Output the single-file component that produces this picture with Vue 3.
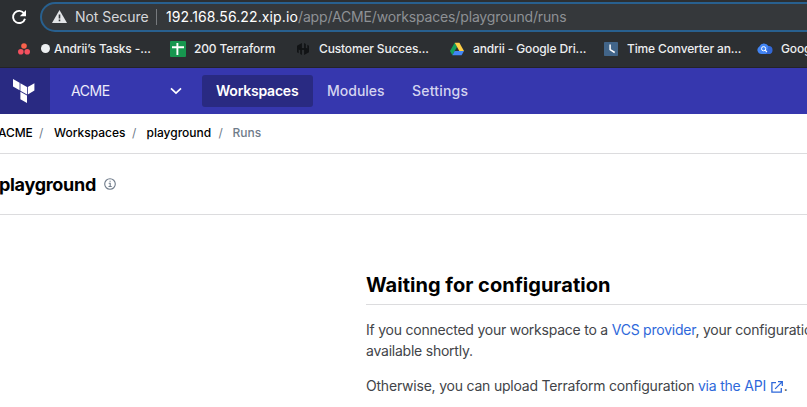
<script setup>
const bookmarks = [
  { icon: 'asana', label: "Andrii’s Tasks -...", dot: true, width: 154, spacing: '-0.13px' },
  { icon: 'sheet', label: '200 Terraform', width: 125, spacing: '-0.15px' },
  { icon: 'hashi', label: 'Customer Succes...', width: 154, spacing: '-0.16px' },
  { icon: 'drive', label: 'andrii - Google Dri...', width: 154, spacing: '-0.12px' },
  { icon: 'clock', label: 'Time Converter an...', width: 154, spacing: '-0.15px' },
  { icon: 'cloud', label: 'Google', width: 154, spacing: '-0.15px' },
]
</script>

<template>
  <div class="screen">
    <header class="browser">
      <div class="toolbar">
        <svg class="reload" viewBox="0 0 16 16">
          <path d="M13.2 4.5A6.1 6.1 0 1 0 14 9.7" fill="none" stroke="#fff" stroke-width="1.9" />
          <path d="M15 1v6.2H8.8z" fill="#fff" />
        </svg>
        <div class="address">
          <svg class="warning" viewBox="0 0 15 13">
            <path d="M7.5 0L15 13H0z" fill="#e3e5e8" />
            <path d="M7.5 4.5v4M7.5 9.6v1.7" stroke="#35383b" stroke-width="1.6" />
          </svg>
          <span class="secure">Not Secure</span>
          <span class="divider"></span>
          <span class="host">192.168.56.22.xip.io</span><span class="path">/app/ACME/workspaces/playground/runs</span>
        </div>
      </div>
      <nav class="bookmarks">
        <div v-for="b in bookmarks" :key="b.icon" class="bookmark" :style="{ width: b.width + 'px' }">
          <svg class="bm-icon" viewBox="0 0 16 16">
            <g v-if="b.icon === 'asana'">
              <circle cx="8" cy="5" r="2.8" fill="#f9624c" />
              <circle cx="4.8" cy="10.7" r="2.8" fill="#f5505e" />
              <circle cx="11.2" cy="10.7" r="2.8" fill="#f5505e" />
            </g>
            <g v-else-if="b.icon === 'sheet'">
              <rect width="16" height="16" rx="1" fill="#17964f" />
              <path d="M2 6.3h12M7.4 2v12" stroke="#fff" stroke-width="1.9" />
            </g>
            <g v-else-if="b.icon === 'hashi'" fill="#111315">
              <path d="M6.9 2v12l-1.7-1V9.3L3.7 8.5v3.7L2 11.2V4.8z" />
              <path d="M5.5 7.1h5v1.8h-5z" />
              <path d="M9.1 14V2l1.7 1v3.7l1.5.8V3.8L14 4.8v6.4z" />
            </g>
            <g v-else-if="b.icon === 'drive'">
              <path d="M5.7 1.7L1 10l2.4 4.2L8 6z" fill="#14a05b" />
              <path d="M5.7 1.7h4.7L15 10h-4.7z" fill="#ffcf46" />
              <path d="M5.7 10H15l-2.4 4.2H3.4z" fill="#4286f5" />
            </g>
            <g v-else-if="b.icon === 'clock'">
              <rect x="1" y="1" width="14" height="14" rx=".7" fill="#426589" />
              <path d="M7.1 3.5v5.2l4.6 2.8" fill="none" stroke="#fff" stroke-width="1.5" />
            </g>
            <g v-else>
              <path d="M4.6 13a4.1 4.1 0 0 1-2.2-7.6 5 5 0 0 1 9-.3 4 4 0 0 1 .2 7.9z" fill="#4285f4" />
              <path d="M11.5 5a4 4 0 0 1 .1 8H9z" fill="#3267d6" />
              <circle cx="6.6" cy="7.7" r="2.1" fill="none" stroke="#fff" stroke-width="1" />
              <path d="M8.1 9.2l1.9 1.9" stroke="#fff" stroke-width="1.1" />
            </g>
          </svg>
          <i v-if="b.dot" class="dot"></i>
          <span :style="{ letterSpacing: b.spacing }">{{ b.label }}</span>
        </div>
      </nav>
    </header>

    <div class="appbar">
      <div class="logo">
        <svg viewBox="0 0 22 25">
          <path d="M0 0l6.6 3.7v7.5L0 7.5zM7.4 4.2L14 8v7.5l-6.6-3.8zM14.8 8l6.6-3.8v7.4l-6.6 3.8zM7.4 12.8l6.6 3.8V24l-6.6-3.7z" fill="#fff" />
        </svg>
      </div>
      <div class="org">
        <span>ACME</span>
        <svg viewBox="0 0 12 8"><path d="M1 1.3l5 4.8 5-4.8" fill="none" stroke="#fff" stroke-width="1.7" /></svg>
      </div>
      <nav class="tabs">
        <a class="tab active">Workspaces</a>
        <a class="tab modules">Modules</a>
        <a class="tab settings">Settings</a>
      </nav>
    </div>

    <div class="crumbs">
      <span class="c-org">ACME</span><i>/</i>
      <span class="c-ws">Workspaces</span><i>/</i>
      <span class="c-name">playground</span><i>/</i>
      <span class="current">Runs</span>
    </div>

    <div class="title">
      <h1>playground</h1>
      <svg viewBox="0 0 12 12">
        <circle cx="6" cy="6" r="5.3" fill="none" stroke="#6f7b8a" stroke-width="1.1" />
        <path d="M4.7 5.3h1.5v3.2M4.5 8.5h3.2M5.5 3.3h1.2" fill="none" stroke="#6f7b8a" stroke-width="1.1" />
      </svg>
    </div>

    <main>
      <h2>Waiting for configuration</h2>
      <p class="first">If you connected your workspace to a <a>VCS provider</a>, your configuration will be<br />available shortly.</p>
      <p class="second">Otherwise, you can upload Terraform configuration <a>via the API <svg viewBox="0 0 12 12"><path d="M5 1.7H.9v9.4h9.4V7M7 .7h4.3V5M11.1.9L4.1 7.9" fill="none" stroke="currentColor" stroke-width="1.3" /></svg></a>.</p>
    </main>
  </div>
</template>

<style>
body { overflow: hidden; background: #fff; }
</style>

<style scoped>
* { box-sizing: border-box; }
.screen { width: 807px; height: 407px; overflow: hidden; background: #fff; font-family: Inter, "Liberation Sans", sans-serif; }
.browser { height: 68px; background: #2c2f32; border-bottom: 1px solid #232327; color: #eceef0; }
.toolbar { display: flex; height: 32px; padding: 2px 0 0 11px; }
.reload { width: 16px; height: 16px; margin-top: 7px; flex: none; }
.address { display: flex; align-items: center; flex: none; width: 850px; height: 30px; margin-left: 13px; padding: 0 0 1px 10px; border: 2px solid #28608f; border-radius: 15px; background: #35383b; font-size: 14px; white-space: nowrap; }
.warning { width: 15px; height: 13px; flex: none; }
.secure { width: 81px; margin-left: 8px; color: #d5d7da; letter-spacing: -0.05px; }
.divider { width: 1px; height: 16px; margin-right: 9px; background: #777a7e; }
.host { width: 132px; color: #fff; letter-spacing: 0.12px; }
.path { color: #8e9195; letter-spacing: -0.16px; }
.bookmarks { display: flex; height: 33px; padding: 0 0 0 16px; font-size: 12px; font-weight: 500; }
.bookmark { display: flex; align-items: center; flex: none; white-space: nowrap; }
.bm-icon { width: 16px; height: 16px; margin-right: 8px; flex: none; }
.dot { width: 9px; height: 9px; margin: 0 4px 0 1px; border-radius: 50%; background: #eef0f2; flex: none; }
.appbar { display: flex; height: 46px; background: #3637ae; color: #fff; }
.logo { width: 50px; padding: 11px 0 0 13px; background: #292a82; }
.logo svg { display: block; width: 22px; height: 25px; }
.org { display: flex; align-items: center; justify-content: space-between; width: 152px; padding: 0 20px 1px 21px; font-size: 14px; letter-spacing: -0.4px; color: #ecebfa; }
.org svg { width: 12px; height: 8px; }
.tabs { display: flex; align-items: center; font-size: 14px; font-weight: 500; }
.tab { height: 32px; line-height: 32px; white-space: nowrap; }
.active { width: 111px; padding-left: 14px; border-radius: 3px; background: #292a82; font-weight: 600; letter-spacing: -0.22px; }
.modules { width: 99px; padding-left: 14px; }
.settings { letter-spacing: 0.2px; }
.crumbs { display: flex; align-items: center; height: 40px; padding-bottom: 2px; border-bottom: 1px solid #dcdcde; font-size: 12px; font-weight: 500; color: #000; white-space: nowrap; }
.crumbs i { width: 14px; font-style: normal; font-weight: 400; color: #6f7b8a; }
.c-org { width: 41px; margin-left: -2px; letter-spacing: -0.1px; }
.crumbs .c-org + i { width: 15px; }
.c-ws { width: 78px; }
.c-name { width: 72px; margin-left: 0.5px; }
.crumbs .current { color: #6f7b8a; }
.title { display: flex; align-items: center; height: 61px; border-bottom: 1px solid #dcdcde; }
h1 { width: 105px; margin: 1px 0 0 -1px; font-size: 18px; line-height: 22px; font-weight: 700; letter-spacing: -0.3px; color: #000; }
.title svg { width: 12px; height: 12px; }
main { width: 620px; margin-left: 366px; padding-top: 55px; font-size: 14px; line-height: 21px; letter-spacing: -0.21px; color: #424448; white-space: nowrap; }
h2 { height: 35px; margin: 0 0 14px; border-bottom: 1px solid #dcdcde; font-size: 20px; line-height: 30px; font-weight: 700; letter-spacing: 0.02px; color: #000; }
p { margin: 0 0 14px; }
.first { letter-spacing: -0.23px; }
a { color: #2e68da; }
.tabs .tab { color: #d4d4f0; }
.tabs .active { color: #fff; }
p svg { width: 12px; height: 12px; margin: 0 1px; vertical-align: -2px; }
</style>
